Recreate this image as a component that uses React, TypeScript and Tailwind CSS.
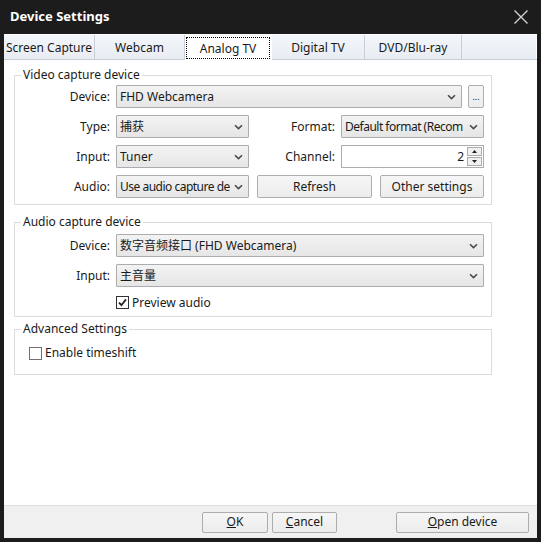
const font = { fontFamily: '"Noto Sans", "Noto Sans CJK SC", sans-serif' }

function Chevron() {
  return (
    <svg width="9" height="6" viewBox="0 0 9 6" className="shrink-0">
      <path d="M1 1.2 L4.5 4.6 L8 1.2" fill="none" stroke="#4a4a4a" strokeWidth="1.6" />
    </svg>
  )
}

function Combo({ value, className, tight }: { value: string; className: string; tight?: boolean }) {
  return (
    <div
      className={`flex h-[23px] items-center overflow-hidden rounded-[1px] border border-[#acacac] bg-gradient-to-b from-[#f3f3f3] to-[#e6e6e6] pl-[3px] pr-[5px] ${className}`}
    >
      <span className={`mr-[3px] min-w-0 flex-1 whitespace-nowrap ${tight ? 'tracking-[-0.5px]' : ''}`}>{value}</span>
      <Chevron />
    </div>
  )
}

function Btn({ children, className }: { children: React.ReactNode; className: string }) {
  return (
    <div
      className={`flex items-center justify-center rounded-[2px] border border-[#adadad] bg-gradient-to-b from-[#f6f6f6] to-[#ececec] ${className}`}
    >
      {children}
    </div>
  )
}

function Check({ checked }: { checked: boolean }) {
  return (
    <div
      className={`flex h-[13px] w-[13px] items-center justify-center border bg-white ${checked ? 'border-[#333333]' : 'border-[#707070]'}`}
    >
      {checked && (
        <svg width="9" height="9" viewBox="0 0 9 9">
          <path d="M1 4.6 L3.4 7.2 L8 1.4" fill="none" stroke="#222" strokeWidth="1.8" />
        </svg>
      )}
    </div>
  )
}

const Label = ({ children, w }: { children: React.ReactNode; w: string }) => (
  <div className={`${w} shrink-0 pr-[6px] text-right`}>{children}</div>
)

export default function App() {
  const tabs = [
    { name: 'Screen Capture', w: 'w-[91px]' },
    { name: 'Webcam', w: 'w-[90px]' },
    { name: 'Analog TV', w: 'w-[87px]', active: true },
    { name: 'Digital TV', w: 'w-[93px]' },
    { name: 'DVD/Blu-ray', w: 'w-[97px]' },
  ]

  return (
    <div style={font} className="flex h-[542px] w-[541px] flex-col bg-[#1c1c1c] px-[4px] pb-[4px] text-[12px] text-[#1a1a1a]">
      {/* title bar */}
      <div className="flex h-[34px] shrink-0 items-center justify-between pl-[6px] pr-[8px]">
        <span className="text-[13px] font-bold text-white">Device Settings</span>
        <svg width="16" height="16" viewBox="0 0 16 16">
          <path d="M1.5 1.5 L14.5 14.5 M14.5 1.5 L1.5 14.5" stroke="#d0d0d0" strokeWidth="1.4" />
        </svg>
      </div>

      <div className="flex flex-1 flex-col bg-white">
        {/* tabs */}
        <div className="flex h-[26px] shrink-0 border-b border-[#c9ced6] pt-[1px]">
          {tabs.map((t) =>
            t.active ? (
              <div key={t.name} className={`${t.w} -mb-[1px] flex items-center justify-center bg-white p-[2px] pb-[1px] pl-[1px]`}>
                <div className="flex h-full w-full items-center justify-center border border-dotted border-black pt-[1px]">
                  {t.name}
                </div>
              </div>
            ) : (
              <div
                key={t.name}
                className={`${t.w} flex items-center justify-center border-r border-[#c9ced6] bg-gradient-to-b from-[#f3f6fa] to-[#e8edf3] pt-[1px]`}
              >
                {t.name}
              </div>
            ),
          )}
          <div className="flex-1 border-r border-white bg-gradient-to-b from-[#f3f6fa] to-[#e8edf3]" />
        </div>

        {/* content */}
        <div className="flex flex-1 flex-col pl-[10px] pt-[7px]">
          <fieldset className="w-[478px] border border-[#dcdcdc] px-0 pb-[6px] pt-[2px]">
            <legend className="ml-[6px] px-[2px] leading-[16px]">Video capture device</legend>
            <div className="flex flex-col gap-[7px]">
              <div className="flex items-center">
                <Label w="w-[101px]">Device:</Label>
                <Combo value="FHD Webcamera" className="w-[346px]" />
                <Btn className="ml-[6px] h-[23px] w-[16px] text-[9px] leading-none">...</Btn>
              </div>
              <div className="flex items-center">
                <Label w="w-[101px]">Type:</Label>
                <Combo value="捕获" className="w-[133px]" />
                <Label w="w-[92px]">Format:</Label>
                <Combo value="Default format (Recom" className="w-[143px]" tight />
              </div>
              <div className="flex items-center">
                <Label w="w-[101px]">Input:</Label>
                <Combo value="Tuner" className="w-[133px]" />
                <Label w="w-[92px]">Channel:</Label>
                <div className="flex h-[23px] w-[143px] items-center border border-[#acacac] bg-white">
                  <span className="flex-1 pr-[3px] text-right">2</span>
                  <div className="mr-[1px] flex w-[15px] flex-col gap-[1px]">
                    <div className="flex h-[9px] items-center justify-center border border-[#acacac] bg-[#f0f0f0]">
                      <svg width="5" height="3" viewBox="0 0 5 3"><path d="M0 3 L2.5 0 L5 3Z" fill="#222" /></svg>
                    </div>
                    <div className="flex h-[9px] items-center justify-center border border-[#acacac] bg-[#f0f0f0]">
                      <svg width="5" height="3" viewBox="0 0 5 3"><path d="M0 0 L2.5 3 L5 0Z" fill="#222" /></svg>
                    </div>
                  </div>
                </div>
              </div>
              <div className="flex items-center">
                <Label w="w-[101px]">Audio:</Label>
                <Combo value="Use audio capture de" className="w-[133px]" tight />
                <Btn className="ml-[8px] h-[23px] w-[115px]">Refresh</Btn>
                <Btn className="ml-[8px] h-[23px] w-[104px]">Other settings</Btn>
              </div>
            </div>
          </fieldset>

          <fieldset className="mt-[9px] w-[478px] border border-[#dcdcdc] px-0 pb-[6px] pt-[4px]">
            <legend className="ml-[6px] px-[2px] leading-[16px]">Audio capture device</legend>
            <div className="flex flex-col gap-[7px]">
              <div className="flex items-center">
                <Label w="w-[101px]">Device:</Label>
                <Combo value="数字音频接口 (FHD Webcamera)" className="w-[368px]" />
              </div>
              <div className="flex items-center">
                <Label w="w-[101px]">Input:</Label>
                <Combo value="主音量" className="w-[368px]" />
              </div>
              <div className="flex h-[16px] items-center pl-[101px] pt-[1px]">
                <Check checked />
                <span className="ml-[3px]">Preview audio</span>
              </div>
            </div>
          </fieldset>

          <fieldset className="mt-[4px] w-[478px] border border-[#dcdcdc] px-0 pb-[13px] pt-[8px]">
            <legend className="ml-[6px] px-[2px] leading-[16px]">Advanced Settings</legend>
            <div className="flex h-[16px] items-center pl-[14px]">
              <Check checked={false} />
              <span className="ml-[3px]">Enable timeshift</span>
            </div>
          </fieldset>
        </div>

        {/* bottom bar */}
        <div className="flex h-[33px] shrink-0 items-center border-t border-[#dfdfdf] bg-[#f0f0f0] pl-[198px]">
          <Btn className="h-[21px] w-[66px]"><span><span className="underline">O</span>K</span></Btn>
          <Btn className="ml-[4px] h-[21px] w-[65px]"><span><span className="underline">C</span>ancel</span></Btn>
          <Btn className="ml-[59px] h-[21px] w-[133px]"><span><span className="underline">O</span>pen device</span></Btn>
        </div>
      </div>
    </div>
  )
}
